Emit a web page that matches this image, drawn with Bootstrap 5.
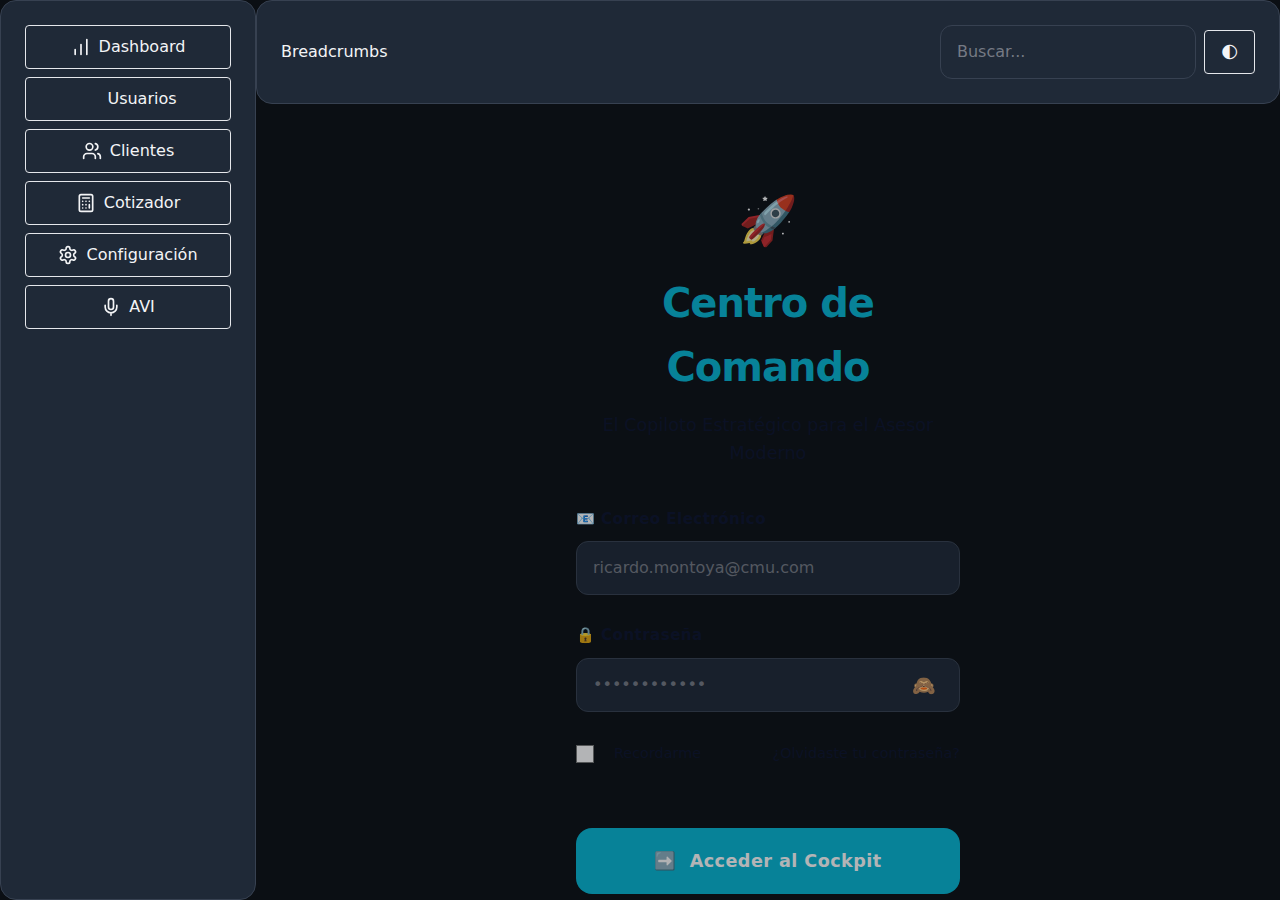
<!DOCTYPE html>
<html lang="es">
<head>
<meta charset="utf-8">
<meta name="viewport" content="width=device-width, initial-scale=1">
<title>Centro de Comando</title>
<link href="https://cdn.jsdelivr.net/npm/bootstrap@5.3.0/dist/css/bootstrap.min.css" rel="stylesheet">
<style>
body{background:#0b0f14;color:#f3f4f6;font:16px/1.6 "DejaVu Sans",sans-serif;height:100vh}
.panel{background:#1f2937;border:1px solid #374151;border-radius:16px;padding:24px}
.side{width:256px}
.btn-nav{--bs-btn-color:#f3f4f6;--bs-btn-border-color:#e5e7eb;--bs-btn-border-radius:4px;--bs-btn-padding-x:16px;--bs-btn-padding-y:0;height:44px;line-height:25.6px}
.btn-nav svg{width:20px;height:20px;fill:none;stroke:currentColor;stroke-width:2;stroke-linecap:round;stroke-linejoin:round}
.theme{font-size:19.2px;width:51px;--bs-btn-padding-x:0;padding-bottom:2px}
.field{background:#1f2937!important;border:1px solid #374151;border-radius:12px;padding:0 16px 2px;height:54px;color:#f3f4f6}
.field::placeholder{color:#757a84}
.search{width:256px}
.login{width:384px;opacity:.69;padding-top:78px}
.rocket{font-size:48px;line-height:77px;margin-bottom:12px}
.title{font-size:40px;line-height:64px;font-weight:800;letter-spacing:-1px;color:#06b6d4;margin-bottom:12px}
.subtle{color:#0c132d}
.tagline{font-size:17.6px;line-height:28.2px;margin-bottom:40px}
.caption{font-size:15.2px;line-height:24px;font-weight:600;letter-spacing:.38px;margin-bottom:10px}
.pass-caption{margin-bottom:10.6px}
.eye{right:24px;top:0;line-height:54px;font-size:19px}
.tick{width:18px;height:18px;background:#fff;border:1px solid #767676}
.small-row{font-size:14.4px;line-height:23px;margin:30.2px 0 62.8px}
.btn-go{--bs-btn-color:#fff;--bs-btn-bg:#06b6d4;--bs-btn-border-radius:16px;--bs-btn-font-weight:700;height:66px;font-size:17.6px;letter-spacing:.44px}
.arrow{margin-right:4.8px}
</style>
</head>
<body class="d-flex overflow-hidden">
<aside class="panel side flex-shrink-0 d-flex flex-column gap-2">
  <a class="btn btn-nav d-flex align-items-center justify-content-center gap-2"><svg viewBox="0 0 24 24"><path d="M5 21v-6M12 21V9M19 21V3"/></svg>Dashboard</a>
  <a class="btn btn-nav d-flex align-items-center justify-content-center gap-2"><svg viewBox="0 0 24 24"></svg>Usuarios</a>
  <a class="btn btn-nav d-flex align-items-center justify-content-center gap-2"><svg viewBox="0 0 24 24"><path d="M16 21v-2a4 4 0 0 0-4-4H6a4 4 0 0 0-4 4v2"/><circle cx="9" cy="7" r="4"/><path d="M22 21v-2a4 4 0 0 0-3-3.87M16 3.13a4 4 0 0 1 0 7.75"/></svg>Clientes</a>
  <a class="btn btn-nav d-flex align-items-center justify-content-center gap-2"><svg viewBox="0 0 24 24"><rect x="4" y="2" width="16" height="20" rx="2"/><path d="M8 6h8M16 14v4M16 10h.01M12 10h.01M8 10h.01M12 14h.01M8 14h.01M12 18h.01M8 18h.01"/></svg>Cotizador</a>
  <a class="btn btn-nav d-flex align-items-center justify-content-center gap-2"><svg viewBox="0 0 24 24"><path d="M12.22 2h-.44a2 2 0 0 0-2 2v.18a2 2 0 0 1-1 1.73l-.43.25a2 2 0 0 1-2 0l-.15-.08a2 2 0 0 0-2.73.73l-.22.38a2 2 0 0 0 .73 2.73l.15.1a2 2 0 0 1 1 1.72v.51a2 2 0 0 1-1 1.74l-.15.09a2 2 0 0 0-.73 2.73l.22.38a2 2 0 0 0 2.73.73l.15-.08a2 2 0 0 1 2 0l.43.25a2 2 0 0 1 1 1.73V20a2 2 0 0 0 2 2h.44a2 2 0 0 0 2-2v-.18a2 2 0 0 1 1-1.73l.43-.25a2 2 0 0 1 2 0l.15.08a2 2 0 0 0 2.73-.73l.22-.39a2 2 0 0 0-.73-2.73l-.15-.08a2 2 0 0 1-1-1.74v-.5a2 2 0 0 1 1-1.74l.15-.09a2 2 0 0 0 .73-2.73l-.22-.38a2 2 0 0 0-2.73-.73l-.15.08a2 2 0 0 1-2 0l-.43-.25a2 2 0 0 1-1-1.73V4a2 2 0 0 0-2-2z"/><circle cx="12" cy="12" r="3"/></svg>Configuración</a>
  <a class="btn btn-nav d-flex align-items-center justify-content-center gap-2"><svg viewBox="0 0 24 24"><path d="M12 2a3 3 0 0 0-3 3v7a3 3 0 0 0 6 0V5a3 3 0 0 0-3-3Z"/><path d="M19 10v2a7 7 0 0 1-14 0v-2M12 19v3"/></svg>AVI</a>
</aside>
<div class="flex-grow-1 d-flex flex-column">
  <header class="panel d-flex align-items-center justify-content-between">
    <span>Breadcrumbs</span>
    <div class="d-flex align-items-center gap-2">
      <input class="field search" placeholder="Buscar...">
      <button class="btn btn-nav theme">◐</button>
    </div>
  </header>
  <main class="login mx-auto">
    <div class="rocket text-center">🚀</div>
    <h1 class="title text-center">Centro de Comando</h1>
    <p class="subtle tagline text-center">El Copiloto Estratégico para el Asesor Moderno</p>
    <div class="subtle caption">📧 Correo Electrónico</div>
    <input class="field w-100 d-block" placeholder="ricardo.montoya@cmu.com">
    <div class="subtle caption pass-caption mt-4 pt-1">🔒 Contraseña</div>
    <div class="position-relative">
      <input class="field w-100 d-block" placeholder="••••••••••••">
      <span class="eye position-absolute">🙈</span>
    </div>
    <div class="small-row subtle d-flex align-items-center justify-content-between">
      <span class="d-flex align-items-center"><span class="tick"></span><span class="ms-3 ps-1">Recordarme</span></span>
      <span>¿Olvidaste tu contraseña?</span>
    </div>
    <button class="btn btn-go w-100 d-flex align-items-center justify-content-center gap-2"><span class="arrow">➡️</span>Acceder al Cockpit</button>
  </main>
</div>
<script src="https://cdn.jsdelivr.net/npm/bootstrap@5.3.0/dist/js/bootstrap.bundle.min.js"></script>
</body>
</html>
